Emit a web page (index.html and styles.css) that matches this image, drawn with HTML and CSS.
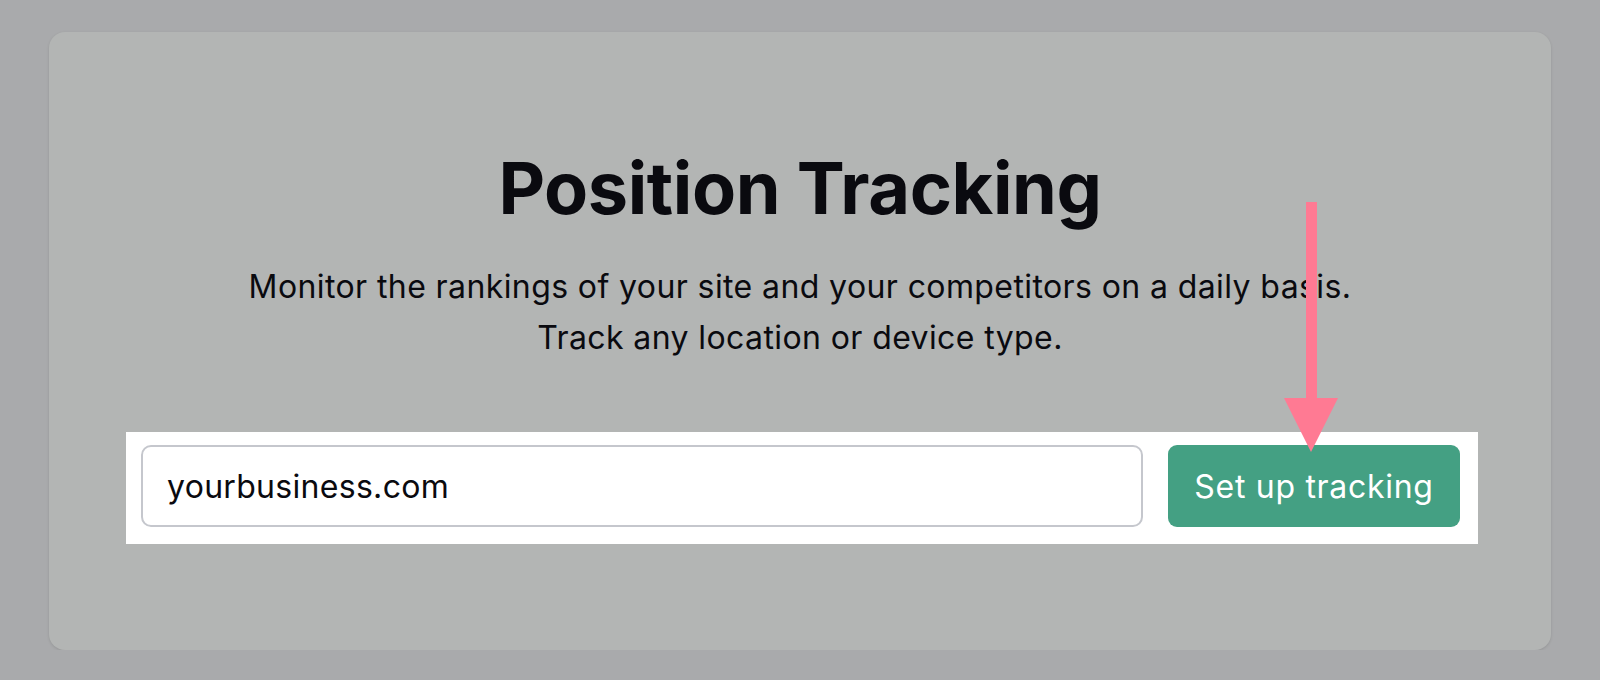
FILE: index.html
```html
<!DOCTYPE html>
<html lang="en">
<head>
    <meta charset="UTF-8">
    <meta name="viewport" content="width=device-width, initial-scale=1.0">
    <title>Position Tracking</title>
    <link rel="stylesheet" href="styles.css">
</head>
<body>
    <div class="card">
        <h1 class="title">Position Tracking</h1>
        <p class="subtitle">Monitor the rankings of your site and your competitors on a daily basis.<br>Track any location or device type.</p>

        <form class="setup" onsubmit="return false">
            <input type="text" class="domain" value="yourbusiness.com">
            <button type="button" class="btn">Set up tracking</button>
        </form>

        <!-- annotation arrow pointing at the button -->
        <svg class="arrow" width="60" height="260" viewBox="0 0 60 260">
            <rect x="22" y="0" width="11" height="200" fill="#ff7a93"/>
            <polygon points="0,196 54,196 27,250" fill="#ff7a93"/>
        </svg>
    </div>
</body>
</html>
```

FILE: styles.css
```css
body {
    margin: 0;
    background-color: #a9aaac;
    font-family: Inter, "Liberation Sans", sans-serif;
    color: #0a0a0f;
}
.card {
    position: relative;
    margin: 32px 49px 0;
    height: 618px;
    box-sizing: border-box;
    padding-top: 120px;
    background-color: #b3b5b4;
    border-radius: 16px;
    box-shadow: 0 1px 3px rgba(0, 0, 0, 0.12);
    display: flex;
    flex-direction: column;
    align-items: center;
}
.title {
    margin: 0;
    font-size: 72px;
    line-height: 1;
    font-weight: 700;
    letter-spacing: -0.4px;
}
.subtitle {
    margin: 37px 0 0;
    font-size: 32px;
    line-height: 51px;
    letter-spacing: 0.4px;
    text-align: center;
}
.setup {
    margin: 69px 0 0 4px;
    width: 1352px;
    box-sizing: border-box;
    padding: 13px 18px 17px 15px;
    background-color: #ffffff;
    display: flex;
    gap: 25px;
}
.domain {
    flex: 1;
    height: 82px;
    box-sizing: border-box;
    padding: 0 24px;
    font-family: Inter, "Liberation Sans", sans-serif;
    font-size: 32px;
    letter-spacing: 0.3px;
    color: #0a0a0f;
    border: 2px solid #c5c7cd;
    border-radius: 10px;
    outline: none;
}
.btn {
    width: 292px;
    height: 82px;
    font-family: Inter, "Liberation Sans", sans-serif;
    font-size: 32px;
    letter-spacing: 0.7px;
    color: #ffffff;
    background-color: #44a083;
    border: none;
    border-radius: 9px;
    cursor: pointer;
}
.arrow {
    position: absolute;
    left: 1235px;
    top: 170px;
}
```
